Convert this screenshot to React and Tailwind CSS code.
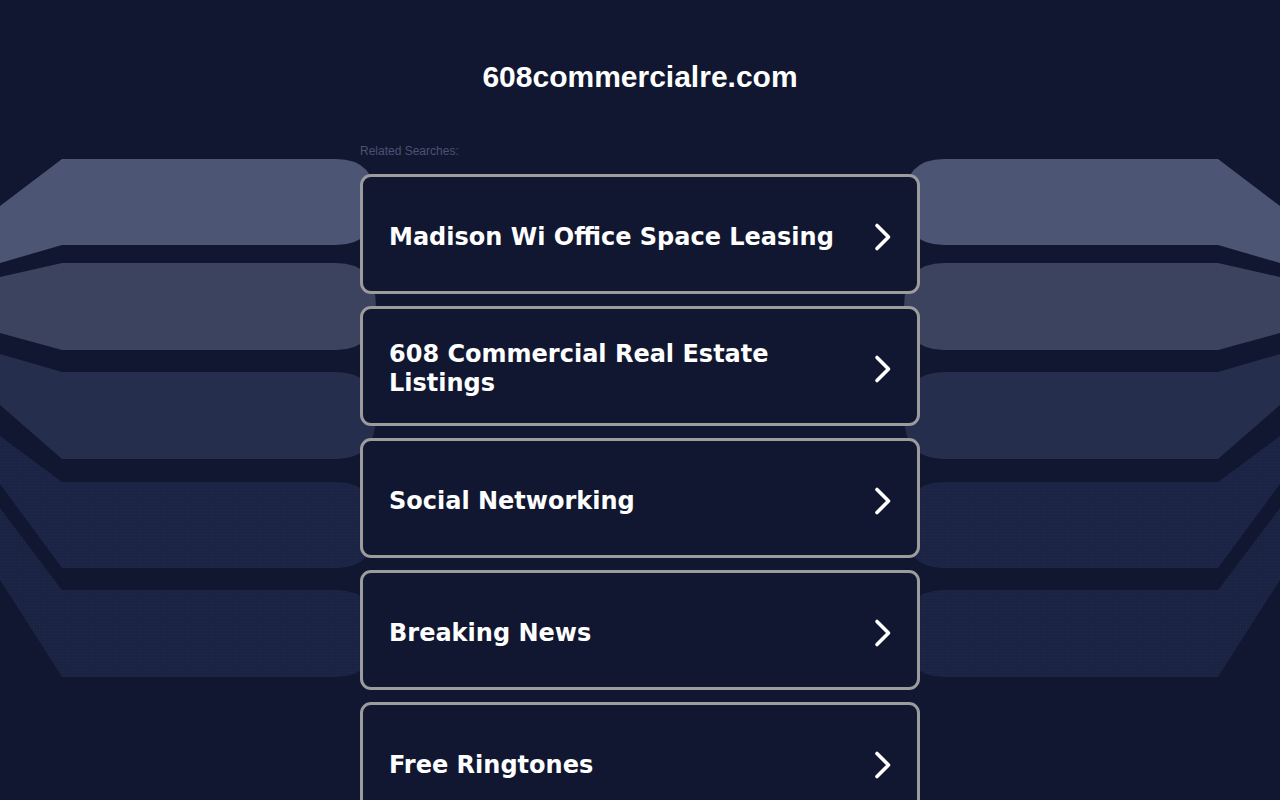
import React from "react";

const searches = [
  "Madison Wi Office Space Leasing",
  "608 Commercial Real Estate Listings",
  "Social Networking",
  "Breaking News",
  "Free Ringtones",
];

// bandas decorativas do fundo (lado esquerdo, o direito é espelhado)
const bands = [
  { top: 159, bottom: 245, lt: 206, lb: 263, color: "#4c5674" },
  { top: 263, bottom: 350, lt: 277, lb: 333, color: "#3b435f" },
  { top: 372, bottom: 459, lt: 354, lb: 405, color: "#262e4d" },
  { top: 482, bottom: 568, lt: 436, lb: 484, color: "#1c2446", dots: true },
  { top: 590, bottom: 677, lt: 508, lb: 580, color: "#1b2343", dots: true },
];

const bandPath = (b) => {
  const r = 40;
  const end = 376;
  return `M0 ${b.lt} L62 ${b.top} L${end - r} ${b.top} Q${end} ${b.top} ${end} ${(b.top + b.bottom) / 2} Q${end} ${b.bottom} ${end - r} ${b.bottom} L62 ${b.bottom} L0 ${b.lb} Z`;
};

const Background = () => (
  <svg className="absolute inset-0 pointer-events-none" width="1280" height="800" viewBox="0 0 1280 800">
    <defs>
      <pattern id="dots" width="3" height="3" patternUnits="userSpaceOnUse">
        <rect width="1" height="1" fill="#283156" />
      </pattern>
    </defs>
    {bands.map((b, i) => (
      <g key={i}>
        <path d={bandPath(b)} fill={b.color} />
        {b.dots && <path d={bandPath(b)} fill="url(#dots)" opacity="0.4" />}
        <g transform="translate(1280 0) scale(-1 1)">
          <path d={bandPath(b)} fill={b.color} />
          {b.dots && <path d={bandPath(b)} fill="url(#dots)" opacity="0.4" />}
        </g>
      </g>
    ))}
  </svg>
);

const Chevron = () => (
  <svg width="20" height="30" viewBox="0 0 20 30" className="shrink-0">
    <path d="M4 3.5 L15.5 15 L4 26.5" fill="none" stroke="#ffffff" strokeWidth="3.6" strokeLinecap="round" strokeLinejoin="round" />
  </svg>
);

const App = () => {
  return (
    <div className="relative min-h-screen bg-[#111730] overflow-hidden">
      <Background />
      <div className="relative w-[560px] mx-auto pt-[59px]">
        <h1 className="text-center text-white font-bold text-[30px] leading-[36px] font-['Liberation_Sans',Arial,sans-serif]">
          608commercialre.com
        </h1>
        <p className="mt-[49px] text-[12px] leading-[14px] text-[#4b5372] font-['Liberation_Sans',Arial,sans-serif]">
          Related Searches:
        </p>
        <div className="mt-[16px] flex flex-col gap-[12px]">
          {searches.map((s) => (
            <a
              key={s}
              href="#"
              className="flex items-center justify-between h-[120px] border-[3px] border-[#9c9c9c] rounded-[11px] bg-[#111730] pl-[26px] pr-[24px] pt-[6px]"
            >
              <span className="text-white font-bold text-[24px] leading-[29px] pr-3 font-['DejaVu_Sans',Verdana,sans-serif]">
                {s}
              </span>
              <Chevron />
            </a>
          ))}
        </div>
      </div>
    </div>
  );
};

export default App;
